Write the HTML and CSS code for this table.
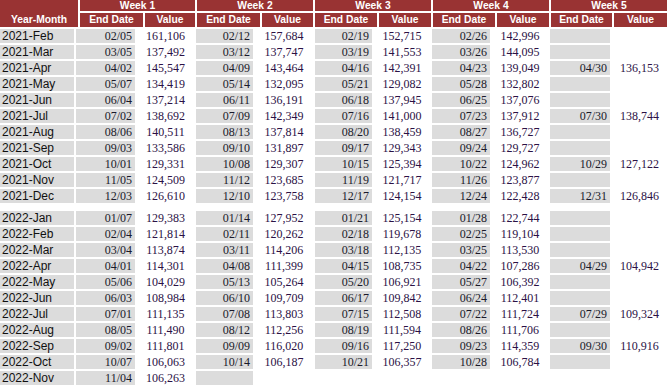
FILE: index.html
```html
<!DOCTYPE html>
<html>
<head>
<meta charset="utf-8">
<link rel="stylesheet" href="styles.css">
</head>
<body>
<div class="sheet">
  <div class="head">
    <div class="h hym">Year-Month</div>
    <div class="h wk">Week 1</div>
    <div class="h wk">Week 2</div>
    <div class="h wk">Week 3</div>
    <div class="h wk">Week 4</div>
    <div class="h wk">Week 5</div>
    <div class="h">End Date</div><div class="h">Value</div>
    <div class="h">End Date</div><div class="h">Value</div>
    <div class="h">End Date</div><div class="h">Value</div>
    <div class="h">End Date</div><div class="h">Value</div>
    <div class="h">End Date</div><div class="h">Value</div>
  </div>
  <div class="body">
    <div class="ym">2021-Feb</div><div class="d">02/05</div><div class="v">161,106</div><div class="d">02/12</div><div class="v">157,684</div><div class="d">02/19</div><div class="v">152,715</div><div class="d">02/26</div><div class="v">142,996</div><div class="d"></div><div class="v"></div>
    <div class="ym">2021-Mar</div><div class="d">03/05</div><div class="v">137,492</div><div class="d">03/12</div><div class="v">137,747</div><div class="d">03/19</div><div class="v">141,553</div><div class="d">03/26</div><div class="v">144,095</div><div class="d"></div><div class="v"></div>
    <div class="ym">2021-Apr</div><div class="d">04/02</div><div class="v">145,547</div><div class="d">04/09</div><div class="v">143,464</div><div class="d">04/16</div><div class="v">142,391</div><div class="d">04/23</div><div class="v">139,049</div><div class="d">04/30</div><div class="v">136,153</div>
    <div class="ym">2021-May</div><div class="d">05/07</div><div class="v">134,419</div><div class="d">05/14</div><div class="v">132,095</div><div class="d">05/21</div><div class="v">129,082</div><div class="d">05/28</div><div class="v">132,802</div><div class="d"></div><div class="v"></div>
    <div class="ym">2021-Jun</div><div class="d">06/04</div><div class="v">137,214</div><div class="d">06/11</div><div class="v">136,191</div><div class="d">06/18</div><div class="v">137,945</div><div class="d">06/25</div><div class="v">137,076</div><div class="d"></div><div class="v"></div>
    <div class="ym">2021-Jul</div><div class="d">07/02</div><div class="v">138,692</div><div class="d">07/09</div><div class="v">142,349</div><div class="d">07/16</div><div class="v">141,000</div><div class="d">07/23</div><div class="v">137,912</div><div class="d">07/30</div><div class="v">138,744</div>
    <div class="ym">2021-Aug</div><div class="d">08/06</div><div class="v">140,511</div><div class="d">08/13</div><div class="v">137,814</div><div class="d">08/20</div><div class="v">138,459</div><div class="d">08/27</div><div class="v">136,727</div><div class="d"></div><div class="v"></div>
    <div class="ym">2021-Sep</div><div class="d">09/03</div><div class="v">133,586</div><div class="d">09/10</div><div class="v">131,897</div><div class="d">09/17</div><div class="v">129,343</div><div class="d">09/24</div><div class="v">129,727</div><div class="d"></div><div class="v"></div>
    <div class="ym">2021-Oct</div><div class="d">10/01</div><div class="v">129,331</div><div class="d">10/08</div><div class="v">129,307</div><div class="d">10/15</div><div class="v">125,394</div><div class="d">10/22</div><div class="v">124,962</div><div class="d">10/29</div><div class="v">127,122</div>
    <div class="ym">2021-Nov</div><div class="d">11/05</div><div class="v">124,509</div><div class="d">11/12</div><div class="v">123,685</div><div class="d">11/19</div><div class="v">121,717</div><div class="d">11/26</div><div class="v">123,877</div><div class="d"></div><div class="v"></div>
    <div class="ym">2021-Dec</div><div class="d">12/03</div><div class="v">126,610</div><div class="d">12/10</div><div class="v">123,758</div><div class="d">12/17</div><div class="v">124,154</div><div class="d">12/24</div><div class="v">122,428</div><div class="d">12/31</div><div class="v">126,846</div>
    <div class="spacer"></div>
    <div class="ym">2022-Jan</div><div class="d">01/07</div><div class="v">129,383</div><div class="d">01/14</div><div class="v">127,952</div><div class="d">01/21</div><div class="v">125,154</div><div class="d">01/28</div><div class="v">122,744</div><div class="d"></div><div class="v"></div>
    <div class="ym">2022-Feb</div><div class="d">02/04</div><div class="v">121,814</div><div class="d">02/11</div><div class="v">120,262</div><div class="d">02/18</div><div class="v">119,678</div><div class="d">02/25</div><div class="v">119,104</div><div class="d"></div><div class="v"></div>
    <div class="ym">2022-Mar</div><div class="d">03/04</div><div class="v">113,874</div><div class="d">03/11</div><div class="v">114,206</div><div class="d">03/18</div><div class="v">112,135</div><div class="d">03/25</div><div class="v">113,530</div><div class="d"></div><div class="v"></div>
    <div class="ym">2022-Apr</div><div class="d">04/01</div><div class="v">114,301</div><div class="d">04/08</div><div class="v">111,399</div><div class="d">04/15</div><div class="v">108,735</div><div class="d">04/22</div><div class="v">107,286</div><div class="d">04/29</div><div class="v">104,942</div>
    <div class="ym">2022-May</div><div class="d">05/06</div><div class="v">104,029</div><div class="d">05/13</div><div class="v">105,264</div><div class="d">05/20</div><div class="v">106,921</div><div class="d">05/27</div><div class="v">106,392</div><div class="d"></div><div class="v"></div>
    <div class="ym">2022-Jun</div><div class="d">06/03</div><div class="v">108,984</div><div class="d">06/10</div><div class="v">109,709</div><div class="d">06/17</div><div class="v">109,842</div><div class="d">06/24</div><div class="v">112,401</div><div class="d"></div><div class="v"></div>
    <div class="ym">2022-Jul</div><div class="d">07/01</div><div class="v">111,135</div><div class="d">07/08</div><div class="v">113,803</div><div class="d">07/15</div><div class="v">112,508</div><div class="d">07/22</div><div class="v">111,724</div><div class="d">07/29</div><div class="v">109,324</div>
    <div class="ym">2022-Aug</div><div class="d">08/05</div><div class="v">111,490</div><div class="d">08/12</div><div class="v">112,256</div><div class="d">08/19</div><div class="v">111,594</div><div class="d">08/26</div><div class="v">111,706</div><div class="d"></div><div class="v"></div>
    <div class="ym">2022-Sep</div><div class="d">09/02</div><div class="v">111,801</div><div class="d">09/09</div><div class="v">116,020</div><div class="d">09/16</div><div class="v">117,250</div><div class="d">09/23</div><div class="v">114,359</div><div class="d">09/30</div><div class="v">110,916</div>
    <div class="ym">2022-Oct</div><div class="d">10/07</div><div class="v">106,063</div><div class="d">10/14</div><div class="v">106,187</div><div class="d">10/21</div><div class="v">106,357</div><div class="d">10/28</div><div class="v">106,784</div><div class="d"></div><div class="v"></div>
    <div class="ym">2022-Nov</div><div class="d">11/04</div><div class="v">106,263</div><div class="d"></div>
  </div>
</div>
</body>
</html>
```
FILE: styles.css
```css
html, body {
  margin: 0;
  padding: 0;
  background: #ffffff;
}
.sheet {
  width: 667px;
  overflow: hidden;
}
.head {
  display: grid;
  grid-template-columns: 78px 63px 50px 63px 51px 62px 52px 62px 52px 61px 53px;
  grid-template-rows: 11px 14px;
  gap: 2px;
}
.h {
  background: #993333;
  color: #ffffff;
  font-family: "Liberation Sans", Arial, sans-serif;
  font-weight: bold;
  font-size: 10.3px;
  line-height: 14px;
  text-align: center;
  white-space: nowrap;
}
.wk {
  grid-column: span 2;
  line-height: 11px;
}
.hym {
  grid-row: span 2;
  display: flex;
  align-items: flex-end;
  justify-content: center;
}
.body {
  display: grid;
  grid-template-columns: 74px 59px 57px 57px 58px 57px 56px 58px 56px 60px 55px;
  gap: 2px;
  margin-top: 2px;
}
.ym, .d, .v {
  height: 14px;
  line-height: 14px;
  white-space: nowrap;
}
.ym {
  background: #dcdcdc;
  color: #111111;
  font-family: "Liberation Sans", Arial, sans-serif;
  font-size: 12px;
  padding-left: 2px;
}
.d {
  background: #dcdcdc;
  color: #1a1a2a;
  font-family: "Liberation Serif", "Times New Roman", serif;
  font-size: 12px;
  text-align: right;
  padding-right: 3px;
}
.v {
  background: #ffffff;
  color: #2b1145;
  font-family: "Liberation Serif", "Times New Roman", serif;
  font-size: 12px;
  text-align: center;
}
.spacer {
  grid-column: 1 / -1;
  height: 4px;
}
```
